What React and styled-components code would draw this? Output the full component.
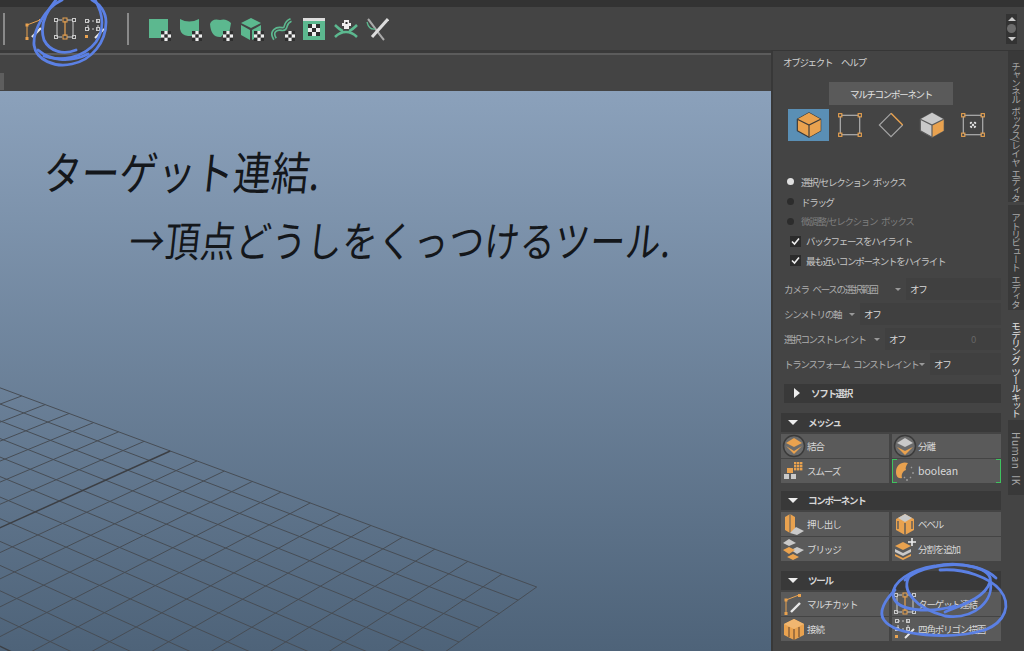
import React from "react";
import styled, { createGlobalStyle } from "styled-components";

const GlobalStyle = createGlobalStyle`
  html, body { margin: 0; padding: 0; background: #444; overflow: hidden; }
  * { box-sizing: border-box; }
`;

const FONT = `"Noto Sans CJK JP", "Noto Sans", sans-serif`;
const ORANGE = "#e9a24f";
const GREEN = "#5cb88f";
const GREY = "#c9c9c9";

const Page = styled.div`
  position: relative;
  width: 1024px;
  height: 651px;
  overflow: hidden;
  display: flex;
  flex-direction: column;
  background: #444;
  font-family: ${FONT};
`;
const TopStrip = styled.div`
  height: 7px;
  background: #333;
`;
const Toolbar = styled.div`
  height: 43px;
  display: flex;
  align-items: center;
  padding-left: 3px;
  position: relative;
  background: #444;
`;
const Separator = styled.div`
  width: 2px;
  height: 32px;
  background: #8a8a8a;
  margin-left: ${(p) => p.$before || 0}px;
  margin-right: ${(p) => p.$after}px;
`;
const ToolSlot = styled.div`
  width: ${(p) => p.$w}px;
  height: 24px;
  display: flex;
  align-items: center;
  justify-content: center;
`;
const Spinner = styled.div`
  margin-left: auto;
  margin-right: 7px;
  width: 11px;
  height: 30px;
  background: #333;
  display: flex;
  flex-direction: column;
  align-items: center;
  justify-content: space-between;
  padding: 3px 0;
`;
const SpinDot = styled.div`
  width: 9px;
  height: 9px;
  border-radius: 50%;
  background: #6c6c6c;
`;
const Arrow = styled.div`
  width: 0;
  height: 0;
  border-left: 4px solid transparent;
  border-right: 4px solid transparent;
  ${(p) => (p.$down ? `border-top: 4px solid #ccc;` : `border-bottom: 4px solid #ccc;`)}
`;
const Body = styled.div`
  flex: 1;
  display: flex;
  min-height: 0;
`;
const MainPane = styled.div`
  width: 771px;
  display: flex;
  flex-direction: column;
`;
const PaneRule = styled.div`
  height: 5px;
  background: #3a3a3a;
  border-bottom: 2px solid #5c5c5c;
`;
const PaneHeader = styled.div`
  height: 36px;
  display: flex;
  align-items: flex-end;
  padding-bottom: 1px;
`;
const PaneTab = styled.div`
  width: 4px;
  height: 17px;
  background: #5e5e5e;
`;
const Viewport = styled.div`
  flex: 1;
  position: relative;
  overflow: hidden;
  background: linear-gradient(180deg, #8ba1bb 0%, #4e6379 100%);
`;
const GridSvg = styled.svg`
  position: absolute;
  inset: 0;
`;
const Note = styled.div`
  position: absolute;
  left: ${(p) => p.$x}px;
  top: ${(p) => p.$y}px;
  font-size: ${(p) => p.$size}px;
  letter-spacing: ${(p) => p.$track}px;
  line-height: 1;
  white-space: nowrap;
  font-weight: 400;
  color: #14171b;
  transform-origin: left center;
  transform: skewX(-6deg) scaleY(1.2);
`;
const SidePane = styled.div`
  flex: 1;
  display: flex;
  flex-direction: column;
  background: #444;
  border-top: 1px solid #363636;
  border-left: 2px solid #383838;
  font-size: 9.5px;
  letter-spacing: -1.3px;
  word-spacing: 3px;
  color: #c4c4c4;
`;
const MenuBar = styled.div`
  height: 22px;
  display: flex;
  align-items: center;
  padding-left: 10px;
  color: #d0d0d0;
`;
const MenuItem = styled.span`
  width: 58px;
`;
const ModeTitle = styled.div`
  margin: 9px 0 0 56px;
  width: 124px;
  height: 23px;
  display: flex;
  align-items: center;
  justify-content: center;
  background: #5a5a5a;
  color: #e2e2e2;
`;
const ModeRow = styled.div`
  margin: 4px 0 0 15px;
  display: flex;
`;
const ModeButton = styled.div`
  width: 41px;
  height: 32px;
  display: flex;
  align-items: center;
  justify-content: center;
  background: ${(p) => (p.$active ? "#5a8fb5" : "transparent")};
`;
const Options = styled.div`
  margin-top: 31px;
  display: flex;
  flex-direction: column;
`;
const OptionRow = styled.div`
  height: 19.75px;
  display: flex;
  align-items: center;
  padding-left: ${(p) => p.$indent}px;
  gap: ${(p) => p.$gap}px;
  color: ${(p) => (p.$dim ? "#7e7e7e" : "#c4c4c4")};
`;
const Radio = styled.div`
  width: 7px;
  height: 7px;
  border-radius: 50%;
  background: ${(p) => (p.$on ? "#e0e0e0" : "#2c2c2c")};
`;
const Check = styled.div`
  width: 11px;
  height: 11px;
  background: #2b2b2b;
  display: flex;
  align-items: center;
  justify-content: center;
`;
const Combos = styled.div`
  margin-top: 6px;
  padding: 0 7px 0 11px;
  display: flex;
  flex-direction: column;
`;
const ComboRow = styled.div`
  height: 25px;
  display: flex;
  align-items: center;
`;
const ComboLabel = styled.span`
  white-space: nowrap;
  width: ${(p) => p.$w}px;
  color: #aeaeae;
`;
const Caret = styled.div`
  width: 0;
  height: 0;
  margin-right: 5px;
  border-left: 3px solid transparent;
  border-right: 3px solid transparent;
  border-top: 3px solid #999;
`;
const ComboField = styled.div`
  flex: 1;
  height: 22px;
  background: #404040;
  display: flex;
  align-items: center;
  justify-content: space-between;
  padding: 0 26px 0 4px;
  color: #d8d8d8;
`;
const ZeroValue = styled.span`
  color: #666;
`;
const SectionHeader = styled.div`
  height: 19px;
  margin-left: ${(p) => p.$left}px;
  margin-right: 7px;
  margin-top: ${(p) => p.$top}px;
  background: #393939;
  display: flex;
  align-items: center;
  padding-left: ${(p) => p.$pad}px;
  gap: ${(p) => p.$gap}px;
  font-weight: 700;
  color: #d6d6d6;
`;
const TriRight = styled.div`
  width: 0;
  height: 0;
  border-top: 5px solid transparent;
  border-bottom: 5px solid transparent;
  border-left: 6px solid #eee;
`;
const TriDown = styled.div`
  width: 0;
  height: 0;
  border-left: 5px solid transparent;
  border-right: 5px solid transparent;
  border-top: 5px solid #eee;
`;
const ToolGrid = styled.div`
  margin: 2px 7px 0 8px;
  display: grid;
  grid-template-columns: 108px 109px;
  grid-auto-rows: 24px;
  column-gap: 3px;
  row-gap: 1px;
`;
const ToolButton = styled.div`
  position: relative;
  display: flex;
  align-items: center;
  gap: 1px;
  padding-left: 1px;
  background: #5a5a5a;
  color: #d8d8d8;
  white-space: nowrap;
  ${(p) =>
    p.$picked &&
    `
    &::before, &::after {
      content: "";
      position: absolute;
      top: 0;
      bottom: 0;
      width: 4px;
      border: 1px solid #3fc25f;
    }
    &::before { left: 0; border-right: none; }
    &::after { right: 0; border-left: none; }
  `}
`;
const ToolLabel = styled.span`
  font-size: ${(p) => (p.$latin ? "10.5px" : "9.5px")};
  letter-spacing: ${(p) => (p.$latin ? "0" : "-1.1px")};
`;
const TabColumn = styled.div`
  width: 16px;
  display: flex;
  flex-direction: column;
  background: #444;
  border-top: 1px solid #363636;
`;
const SideTab = styled.div`
  height: ${(p) => p.$h}px;
  margin-bottom: ${(p) => p.$after}px;
  padding-top: ${(p) => p.$pad}px;
  background: ${(p) => (p.$active ? "#444" : "#393939")};
  color: ${(p) => (p.$active ? "#e4e4e4" : "#a8a8a8")};
  writing-mode: vertical-rl;
  font-size: ${(p) => p.$size}px;
  letter-spacing: ${(p) => p.$track}px;
  word-spacing: 3px;
  line-height: 16px;
  white-space: nowrap;
  overflow: hidden;
`;
const ScribbleLayer = styled.svg`
  position: absolute;
  inset: 0;
  pointer-events: none;
`;

// grid plane, u runs along the far edge, v runs towards the camera
function project(u, v) {
  const w = 1 + 0.013 * u - 0.0156 * v;
  return [536.7 + (-35.3 * u - 18.2 * v) / w, 587 + (-13.1 * u + 12.9 * v) / w];
}

function FloorGrid() {
  const lines = [];
  for (let i = 0; i <= 24; i++) {
    const a = project(i, 0);
    const b = project(i, 24);
    const c = project(0, i);
    const d = project(24, i);
    const heavy = i === 12;
    lines.push(
      <line key={"u" + i} x1={a[0]} y1={a[1]} x2={b[0]} y2={b[1]} stroke={heavy ? "#3c3f44" : "#474d55"} strokeWidth={heavy ? 1.5 : 1} />,
      <line key={"v" + i} x1={c[0]} y1={c[1]} x2={d[0]} y2={d[1]} stroke={heavy ? "#3c3f44" : "#474d55"} strokeWidth={heavy ? 1.5 : 1} />
    );
  }
  return (
    <GridSvg width="771" height="560" viewBox="0 91 771 560">
      {lines}
    </GridSvg>
  );
}

const Ic = ({ size = 24, children }) => (
  <svg width={size} height={size} viewBox="0 0 24 24" fill="none">
    {children}
  </svg>
);

const Pt = ({ x, y, c = GREY, s = 3 }) => (
  <rect x={x - s / 2} y={y - s / 2} width={s} height={s} fill="none" stroke={c} strokeWidth="1" />
);

const Badge = () => (
  <g>
    <rect x="14" y="14" width="10" height="10" fill="#eee" />
    {[[14, 14], [20.6, 14], [17.3, 17.3], [14, 20.6], [20.6, 20.6]].map(([x, y]) => (
      <rect key={x + "-" + y} x={x} y={y} width="3.4" height="3.4" fill="#2e2e2e" />
    ))}
  </g>
);

const GreenSquare = () => (
  <Ic><rect x="2" y="2" width="19" height="19" fill={GREEN} /><Badge /></Ic>
);
const GreenDip = () => (
  <Ic><path d="M2 2Q11 7 21 2V19H10Q3 18 2 12Z" fill={GREEN} /><Badge /></Ic>
);
const GreenArch = () => (
  <Ic><path d="M1 7Q3 1 11 3Q17 1 22 6L20 17Q15 15 12 20Q2 21 1 7Z" fill={GREEN} /><Badge /></Ic>
);
const GreenCube = () => (
  <Ic>
    <path d="M11 1L21 6L11 11L1 6Z" fill={GREEN} />
    <path d="M1 8L10 13V23L1 18Z" fill={GREEN} />
    <path d="M12 13L21 8V14H14V22L12 23Z" fill={GREEN} />
    <Badge />
  </Ic>
);
const GreenWave = () => (
  <Ic>
    <path d="M4 22C-1 14 6 11 11 12C17 13 12 6 20 3" stroke={GREEN} strokeWidth="4.5" />
    <path d="M4 22C-1 14 6 11 11 12C17 13 12 6 20 3" stroke="#444" strokeWidth="1.2" />
    <Badge />
  </Ic>
);
const GreenWindow = () => (
  <Ic>
    <rect x="1" y="1" width="22" height="22" fill={GREEN} />
    <rect x="1" y="1" width="22" height="3" fill="#ddd" />
    <rect x="6" y="7" width="12" height="12" fill="#eee" />
    {[[6, 7], [14, 7], [10, 11], [6, 15], [14, 15]].map(([x, y]) => (
      <rect key={x + "-" + y} x={x} y={y} width="4" height="4" fill="#2e2e2e" />
    ))}
  </Ic>
);
const GreenCross = () => (
  <Ic>
    <path d="M1 8Q6 13 9 14M23 8Q18 13 15 14M1 20Q6 15 12 15Q18 15 23 20" stroke={GREEN} strokeWidth="2.5" />
    <rect x="10" y="3" width="5" height="9" fill="#eee" />
    <rect x="11.5" y="5" width="2" height="2" fill="#2e2e2e" />
    <rect x="8" y="6" width="2" height="3" fill="#eee" />
    <rect x="15" y="6" width="2" height="3" fill="#eee" />
  </Ic>
);
const GreenKnife = () => (
  <Ic>
    <path d="M3 2C8 8 13 16 19 23" stroke="#aaa" strokeWidth="2" />
    <path d="M23 2L7 20" stroke="#ddd" strokeWidth="3" />
    <path d="M2 5Q4 13 10 12" stroke={GREEN} strokeWidth="1.3" />
  </Ic>
);

const MultiCutIcon = () => (
  <Ic>
    <path d="M4 8L17 3M4 8V22" stroke={ORANGE} strokeWidth="1" />
    <rect x="2.5" y="6.5" width="3" height="3" fill={ORANGE} />
    <rect x="2.5" y="20" width="3" height="3" fill={ORANGE} />
    <rect x="16" y="2" width="3" height="3" fill={ORANGE} />
    <path d="M9 20L18 11" stroke="#e8e8e8" strokeWidth="2.4" />
  </Ic>
);
const TargetWeldIcon = () => (
  <Ic>
    <path d="M4 4V20M20 4V20M5 3H9M14 3H19M5 20H9M14 20H19" stroke={GREY} strokeWidth="1" />
    <path d="M12 4V19" stroke={ORANGE} strokeWidth="1.2" />
    <Pt x={3} y={3} />
    <Pt x={21} y={3} />
    <Pt x={3} y={20} />
    <Pt x={21} y={20} />
    <Pt x={12} y={3} c={ORANGE} s={4} />
    <Pt x={12} y={20} c={ORANGE} s={4} />
  </Ic>
);
const QuadDrawIcon = () => (
  <Ic>
    <path d="M5 4H15M5 12H15M5 4V12M15 4V12" stroke={GREY} strokeWidth="1" strokeDasharray="2 2" />
    <Pt x={4} y={4} />
    <Pt x={15} y={4} />
    <Pt x={4} y={12} />
    <Pt x={15} y={12} />
    <rect x="2" y="18" width="3" height="3" fill={ORANGE} />
    <path d="M12 21L21 12" stroke="#e8e8e8" strokeWidth="2" />
  </Ic>
);

const CubeMode = ({ top = ORANGE, left = ORANGE, right = ORANGE, line = "#3a3a3a" }) => (
  <Ic size={28}>
    <path d="M12 1.5L22 7V17L12 22.5L2 17V7Z" fill={left} stroke={line} strokeWidth="1" strokeLinejoin="round" />
    <path d="M12 12L22 7V17L12 22.5Z" fill={right} />
    <path d="M12 1.5L22 7L12 12L2 7Z" fill={top} />
    <path d="M2 7L12 12L22 7M12 12V22.5" stroke={line} strokeWidth="1" />
  </Ic>
);
const VertexMode = ({ inner }) => (
  <Ic size={26}>
    <path d="M4 3H20M4 21H20M3 4V20M21 4V20" stroke={GREY} strokeWidth="0.9" />
    {[[3, 3], [21, 3], [3, 21], [21, 21]].map(([x, y]) => (
      <Pt key={x + "-" + y} x={x} y={y} c={ORANGE} s={3} />
    ))}
    {inner && <path d="M9.5 9.5L14.5 14.5M14.5 9.5L9.5 14.5" stroke="#eee" strokeWidth="2" strokeDasharray="1.6 1" />}
  </Ic>
);
const EdgeMode = () => (
  <Ic size={28}>
    <path d="M12 2L2 12L12 22L22 12" stroke="#a5a5a5" strokeWidth="1" />
    <path d="M12 2L22 12" stroke={ORANGE} strokeWidth="1.2" />
  </Ic>
);

const CombineIcon = () => (
  <Ic>
    <circle cx="12" cy="12" r="10.5" stroke="#3b3b3b" strokeWidth="1.5" fill="#6b6b6b" />
    <path d="M12 4L20 9L12 13L4 9Z" fill={ORANGE} />
    <path d="M4 12L12 17L20 12L12 20Z" fill={ORANGE} />
  </Ic>
);
const SeparateIcon = () => (
  <Ic>
    <circle cx="12" cy="12" r="10.5" stroke="#3b3b3b" strokeWidth="1.5" fill="#6b6b6b" />
    <path d="M12 4L20 9L12 13L4 9Z" fill={GREY} />
    <path d="M4 13L12 17L20 13L12 21Z" fill={ORANGE} />
  </Ic>
);
const SmoothIcon = () => (
  <Ic>
    {[[12, 3], [15, 3], [18, 3], [12, 6], [15, 6], [18, 6], [12, 9], [15, 9], [18, 9]].map(([x, y]) => (
      <rect key={x + "-" + y} x={x} y={y} width="2.4" height="2.4" fill={ORANGE} />
    ))}
    <rect x="5" y="9" width="6" height="5" fill={ORANGE} />
    <rect x="2" y="15" width="5" height="5" fill={GREY} />
    <rect x="9" y="15" width="5" height="5" fill={GREY} />
  </Ic>
);
const BooleanIcon = () => (
  <Ic>
    <path d="M3 13C3 6 9 2 15 4C13 7 12 9 13 11C10 12 8 15 9 19C5 20 3 17 3 13Z" fill={ORANGE} />
    <path d="M13 21L15 21M17 19L18 18M20 15L20 13M19 9L18 8M11 18L12 19" stroke="#999" strokeWidth="1.4" />
  </Ic>
);
const ExtrudeIcon = () => (
  <Ic>
    <path d="M3 5L8 2L13 5V18L8 21L3 18Z" fill={ORANGE} />
    <path d="M8 2V21" stroke="#5a5a5a" />
    <path d="M14 15L22 19L15 23L8 21Z" fill={GREY} />
  </Ic>
);
const BevelIcon = () => (
  <Ic>
    <path d="M12 2L21 7V18L12 23L3 18V7Z" fill={ORANGE} />
    <path d="M12 2L19 6L12 10L5 6Z" fill={GREY} />
    <path d="M12 11V23M5 9V17M19 9V17" stroke="#5a5a5a" strokeWidth="1.4" />
  </Ic>
);
const BridgeIcon = () => (
  <Ic>
    <path d="M7 2L14 6L7 9L1 6Z" fill={GREY} />
    <path d="M15 10L22 13L15 17L9 13Z" fill={GREY} />
    <path d="M7 10L13 13L7 17L1 13Z" fill={ORANGE} />
    <path d="M11 17L17 20L11 23L5 20Z" fill={ORANGE} />
  </Ic>
);
const InsertEdgeIcon = () => (
  <Ic>
    <path d="M10 5L18 9L10 13L2 9Z" fill={ORANGE} />
    <path d="M2 12L10 16L18 12V15L10 19L2 15Z" fill={GREY} />
    <path d="M2 17L10 21L18 17V19L10 23L2 19Z" fill={ORANGE} />
    <path d="M19 1V9M15 5H23" stroke="#eee" strokeWidth="1.6" />
  </Ic>
);
const ConnectIcon = () => (
  <Ic>
    <path d="M12 2L22 7V18L12 23L2 18V7Z" fill={ORANGE} />
    <path d="M12 2L22 7L12 12L2 7Z" fill="#f0b670" />
    <path d="M12 12V23M7 10V20M17 10V20" stroke="#5a4030" strokeWidth="1" />
  </Ic>
);

const GREEN_TOOLS = [
  [GreenSquare, 31], [GreenDip, 31], [GreenArch, 31], [GreenCube, 31],
  [GreenWave, 31], [GreenWindow, 32], [GreenCross, 31], [GreenKnife, 31],
];

const CheckMark = () => (
  <svg width="9" height="9" viewBox="0 0 9 9" fill="none">
    <path d="M1 4.5L3.5 7L8 1.5" stroke="#eee" strokeWidth="1.6" />
  </svg>
);

const COMBOS = [
  { label: "カメラ ベースの選択範囲", w: 111 },
  { label: "シンメトリの軸", w: 65 },
  { label: "選択コンストレイント", w: 90, zero: true },
  { label: "トランスフォーム コンストレイント", w: 135 },
];

const TOOL_SECTIONS = [
  {
    name: "メッシュ", top: 10,
    tools: [
      { Icon: CombineIcon, label: "結合" },
      { Icon: SeparateIcon, label: "分離" },
      { Icon: SmoothIcon, label: "スムーズ" },
      { Icon: BooleanIcon, label: "boolean", picked: true, latin: true },
    ],
  },
  {
    name: "コンポーネント", top: 8,
    tools: [
      { Icon: ExtrudeIcon, label: "押し出し" },
      { Icon: BevelIcon, label: "ベベル" },
      { Icon: BridgeIcon, label: "ブリッジ" },
      { Icon: InsertEdgeIcon, label: "分割を追加" },
    ],
  },
  {
    name: "ツール", top: 10,
    tools: [
      { Icon: MultiCutIcon, label: "マルチカット" },
      { Icon: TargetWeldIcon, label: "ターゲット連結" },
      { Icon: ConnectIcon, label: "接続" },
      { Icon: QuadDrawIcon, label: "四角ポリゴン描画" },
    ],
  },
];

export default function App() {
  return (
    <Page>
      <GlobalStyle />
      <TopStrip />
      <Toolbar>
        <Separator $after={15} />
        <ToolSlot $w={30}><MultiCutIcon /></ToolSlot>
        <ToolSlot $w={30}><TargetWeldIcon /></ToolSlot>
        <ToolSlot $w={30}><QuadDrawIcon /></ToolSlot>
        <Separator $before={17} $after={14} />
        {GREEN_TOOLS.map(([Icon, w], i) => (
          <ToolSlot key={i} $w={w}><Icon /></ToolSlot>
        ))}
        <Spinner>
          <Arrow />
          <SpinDot />
          <Arrow $down />
        </Spinner>
      </Toolbar>
      <Body>
        <MainPane>
          <PaneRule />
          <PaneHeader><PaneTab /></PaneHeader>
          <Viewport>
            <FloorGrid />
            <Note $x={44} $y={61} $size={38} $track={0}>ターゲット連結.</Note>
            <Note $x={130} $y={130} $size={35} $track={0.5}>→頂点どうしをくっつけるツール.</Note>
          </Viewport>
        </MainPane>
        <SidePane>
          <MenuBar>
            <MenuItem>オブジェクト</MenuItem>
            <MenuItem>ヘルプ</MenuItem>
          </MenuBar>
          <ModeTitle>マルチコンポーネント</ModeTitle>
          <ModeRow>
            <ModeButton $active><CubeMode /></ModeButton>
            <ModeButton><VertexMode /></ModeButton>
            <ModeButton><EdgeMode /></ModeButton>
            <ModeButton><CubeMode top={GREY} left={GREY} line="#5a5a5a" /></ModeButton>
            <ModeButton><VertexMode inner /></ModeButton>
          </ModeRow>
          <Options>
            <OptionRow $indent={14} $gap={7}><Radio $on />選択/セレクション ボックス</OptionRow>
            <OptionRow $indent={14} $gap={7}><Radio />ドラッグ</OptionRow>
            <OptionRow $indent={14} $gap={7} $dim><Radio />微調整/セレクション ボックス</OptionRow>
            <OptionRow $indent={17} $gap={5}><Check><CheckMark /></Check>バックフェースをハイライト</OptionRow>
            <OptionRow $indent={17} $gap={5}><Check><CheckMark /></Check>最も近いコンポーネントをハイライト</OptionRow>
          </Options>
          <Combos>
            {COMBOS.map((c) => (
              <ComboRow key={c.label}>
                <ComboLabel $w={c.w}>{c.label}</ComboLabel>
                <Caret />
                <ComboField>オフ{c.zero && <ZeroValue>0</ZeroValue>}</ComboField>
              </ComboRow>
            ))}
          </Combos>
          <SectionHeader $left={11} $top={7} $pad={10} $gap={11}><TriRight />ソフト選択</SectionHeader>
          {TOOL_SECTIONS.map((s) => (
            <React.Fragment key={s.name}>
              <SectionHeader $left={8} $top={s.top} $pad={7} $gap={10}><TriDown />{s.name}</SectionHeader>
              <ToolGrid>
                {s.tools.map(({ Icon, label, picked, latin }) => (
                  <ToolButton key={label} $picked={picked}>
                    <Icon />
                    <ToolLabel $latin={latin}>{label}</ToolLabel>
                  </ToolButton>
                ))}
              </ToolGrid>
            </React.Fragment>
          ))}
        </SidePane>
        <TabColumn>
          <SideTab $h={151} $after={3} $pad={11} $size={9.5} $track={-1.4}>チャンネル ボックス/レイヤ エディタ</SideTab>
          <SideTab $h={105} $after={10} $pad={8} $size={9.5} $track={-1.2}>アトリビュート エディタ</SideTab>
          <SideTab $h={100} $after={0} $pad={2} $size={9.5} $track={-1.2} $active>モデリング ツールキット</SideTab>
          <SideTab $h={75} $after={0} $pad={12} $size={10} $track={0.6}>Human IK</SideTab>
        </TabColumn>
      </Body>
      <ScribbleLayer width="1024" height="651" viewBox="0 0 1024 651" fill="none" stroke="#5b80e4" strokeWidth="2.8" strokeLinecap="round">
        <path d="M62 0C45 8 33 30 34 45C36 60 55 68 72 64C92 60 106 42 106 22C106 12 100 4 92 0" />
        <path d="M56 0C44 14 40 28 44 40C50 52 64 55 76 50" />
        <path d="M44 56C60 62 84 58 96 42C104 30 104 15 95 0" />
        <path d="M38 50C52 62 72 62 88 54" />
        <path d="M945 612C962 605 985 598 990 582C994 568 960 561 935 566C910 570 892 582 893 595C895 612 930 613 955 606" />
        <path d="M895 590C885 600 878 612 884 620C895 636 950 640 985 630C1005 622 1012 605 1000 590C990 578 965 568 940 570" />
        <path d="M910 575C900 590 915 608 945 616C975 620 995 600 990 580" />
        <path d="M905 580C925 562 975 558 996 578" />
      </ScribbleLayer>
    </Page>
  );
}
